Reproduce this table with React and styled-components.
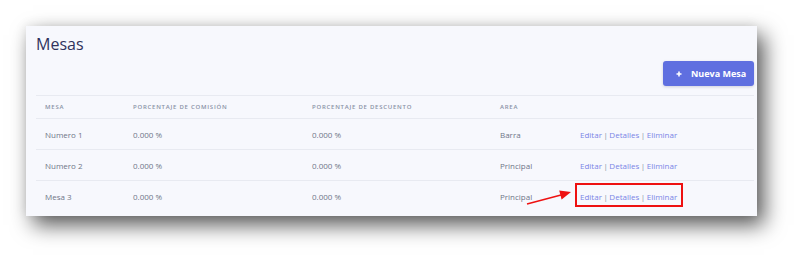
import styled, { createGlobalStyle } from "styled-components";

const GlobalStyle = createGlobalStyle`
  html, body {
    margin: 0;
    padding: 0;
    background: #ffffff;
  }
  body {
    font-family: "Open Sans", "Noto Sans", sans-serif;
  }
`;

const Page = styled.div`
  width: 809px;
  height: 268px;
  padding: 26px 0 0 26px;
  box-sizing: border-box;
  overflow: hidden;
`;

const Panel = styled.div`
  width: 731px;
  height: 190px;
  box-sizing: border-box;
  padding: 8px 3px 0 10px;
  background: #f7f8fd;
  box-shadow: 7px 9px 20px rgba(0, 0, 0, 0.66), -2px -2px 10px rgba(0, 0, 0, 0.06);
  display: flex;
  flex-direction: column;
`;

const Title = styled.h1`
  margin: 0;
  font-size: 16px;
  line-height: 20px;
  font-weight: 500;
  color: #2f325c;
`;

const Toolbar = styled.div`
  display: flex;
  justify-content: flex-end;
  margin: 7px 0 9px;
`;

const AddButton = styled.button`
  display: flex;
  align-items: center;
  gap: 9px;
  height: 25px;
  width: 91px;
  padding: 0 0 0 13px;
  box-sizing: border-box;
  border: none;
  border-radius: 3px;
  background: #5f6fe0;
  box-shadow: 0 1px 3px rgba(50, 50, 93, 0.2);
  color: #ffffff;
  font-family: "Open Sans", sans-serif;
  font-size: 9px;
  font-weight: 700;
`;

const Table = styled.div`
  display: grid;
  grid-template-columns: 88px 179px 188px 80px 1fr;
`;

const HeadCell = styled.div`
  height: 24px;
  padding-left: 9px;
  display: flex;
  align-items: center;
  border-top: 1px solid #e8eaf1;
  border-bottom: 1px solid #e8eaf1;
  box-sizing: border-box;
  font-size: 6px;
  font-weight: 600;
  letter-spacing: 0.75px;
  text-transform: uppercase;
  color: #8a92a6;
`;

const Cell = styled.div`
  position: relative;
  height: 31px;
  padding-left: 9px;
  display: flex;
  align-items: center;
  box-sizing: border-box;
  border-bottom: ${(p) => (p.$last ? "none" : "1px solid #e8eaf1")};
  font-size: 8px;
  color: #6f7688;
`;

const Link = styled.span`
  color: #7a84e6;
`;

const Sep = styled.span`
  color: #8a92a6;
  margin: 0 1.5px;
`;

const Highlight = styled.div`
  position: absolute;
  left: 4px;
  top: 2px;
  width: 108px;
  height: 24px;
  border: 2px solid #ee1111;
  box-sizing: border-box;
`;

const Arrow = styled.svg`
  position: absolute;
  left: -44px;
  top: 6px;
  overflow: visible;
`;

const rows = [
  { name: "Numero 1", comision: "0.000 %", descuento: "0.000 %", area: "Barra" },
  { name: "Numero 2", comision: "0.000 %", descuento: "0.000 %", area: "Principal" },
  { name: "Mesa 3", comision: "0.000 %", descuento: "0.000 %", area: "Principal" },
];

const Actions = () => (
  <>
    <Link>Editar</Link>
    <Sep>|</Sep>
    <Link>Detalles</Link>
    <Sep>|</Sep>
    <Link>Eliminar</Link>
  </>
);

const App = () => {
  return (
    <Page>
      <GlobalStyle />
      <Panel>
        <Title>Mesas</Title>
        <Toolbar>
          <AddButton>
            <svg width="6" height="6" viewBox="0 0 6 6">
              <path d="M3 0.5v5M0.5 3h5" stroke="#fff" strokeWidth="1.6" />
            </svg>
            Nueva Mesa
          </AddButton>
        </Toolbar>
        <Table>
          <HeadCell>Mesa</HeadCell>
          <HeadCell>Porcentaje de comisión</HeadCell>
          <HeadCell>Porcentaje de descuento</HeadCell>
          <HeadCell>Area</HeadCell>
          <HeadCell />
          {rows.map((r, i) => {
            const last = i === rows.length - 1;
            return [
              <Cell key={i + "a"} $last={last}>{r.name}</Cell>,
              <Cell key={i + "b"} $last={last}>{r.comision}</Cell>,
              <Cell key={i + "c"} $last={last}>{r.descuento}</Cell>,
              <Cell key={i + "d"} $last={last}>{r.area}</Cell>,
              <Cell key={i + "e"} $last={last}>
                <Actions />
                {last && (
                  <>
                    <Highlight />
                    <Arrow width="44" height="17" viewBox="0 0 44 17">
                      <line x1="0" y1="17" x2="34" y2="8" stroke="#ee1111" strokeWidth="1.4" />
                      <polygon points="44,5 32.2,3.4 34.6,12.4" fill="#ee1111" />
                    </Arrow>
                  </>
                )}
              </Cell>,
            ];
          })}
        </Table>
      </Panel>
    </Page>
  );
};

export default App;
